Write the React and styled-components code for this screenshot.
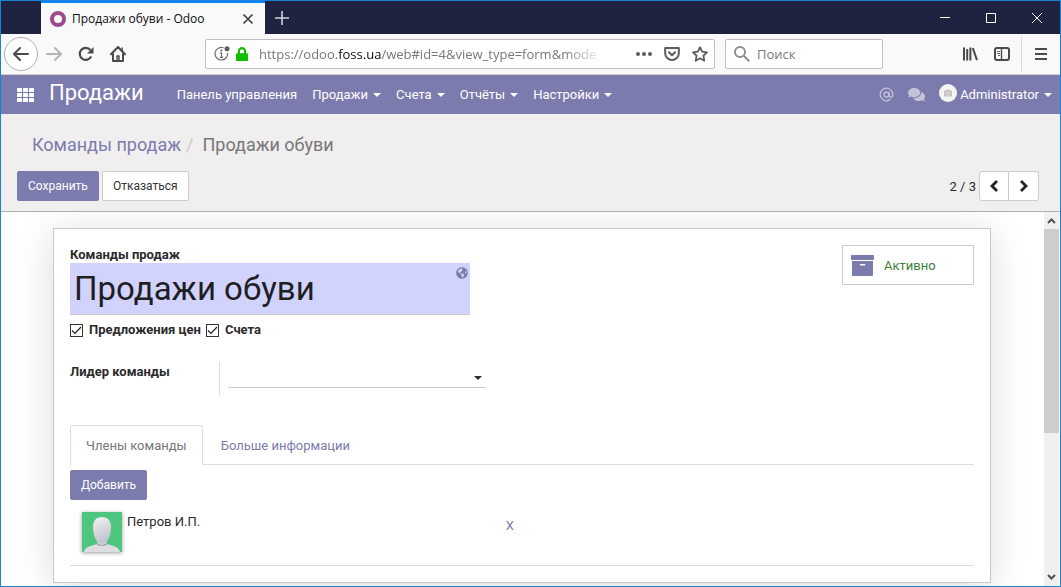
import styled, { createGlobalStyle } from "styled-components";
import { useState } from "react";
import { AtSign } from "lucide-react";
import { FaCamera, FaComments, FaGlobeAmericas, FaLock } from "react-icons/fa";

const menus = [
    { title: 'Панель управления', dropdown: false },
    { title: 'Продажи', dropdown: true },
    { title: 'Счета', dropdown: true },
    { title: 'Отчёты', dropdown: true },
    { title: 'Настройки', dropdown: true },
];

const tabs = ['Члены команды', 'Больше информации'];

export default function App() {
    return (
        <>
            <GlobalStyle />
            <WindowSC>
                <TitleBar />
                <Toolbar />
                <Navbar />
                <ControlPanel />
                <ContentSC>
                    <MainSC>
                        <TeamForm />
                    </MainSC>
                    <Scrollbar />
                </ContentSC>
            </WindowSC>
        </>
    )
}

function TitleBar() {
    return (
        <TitleBarSC>
            <BrowserTabSC>
                <FaviconSC />
                <span>Продажи обуви - Odoo</span>
                <TabCloseSC aria-label="Закрыть вкладку">
                    <svg width="12" height="12" viewBox="0 0 12 12" fill="none" stroke="#3c3c40" strokeWidth="1.6">
                        <path d="M1.500 1.500l9 9M10.500 1.500l-9 9" />
                    </svg>
                </TabCloseSC>
            </BrowserTabSC>
            <NewTabSC aria-label="Новая вкладка">
                <svg width="14" height="14" viewBox="0 0 14 14" stroke="#d2d3dc" strokeWidth="1.6">
                    <path d="M7 0v14M0 7h14" />
                </svg>
            </NewTabSC>
            <WindowButtonSC aria-label="Свернуть">
                <svg width="10" height="10" stroke="#fff"><path d="M0 4.5h10" /></svg>
            </WindowButtonSC>
            <WindowButtonSC aria-label="Развернуть">
                <svg width="10" height="10" stroke="#fff" fill="none"><path d="M.5.5h9v9h-9z" /></svg>
            </WindowButtonSC>
            <WindowButtonSC aria-label="Закрыть">
                <svg width="10" height="10" stroke="#fff"><path d="M0 0l10 10M10 0L0 10" /></svg>
            </WindowButtonSC>
        </TitleBarSC>
    )
}

function Toolbar() {
    return (
        <ToolbarSC>
            <BackSC aria-label="Назад">
                <svg width="16" height="16" viewBox="0 0 16 16" fill="none" stroke="#4a4a4f" strokeWidth="2" strokeLinecap="round" strokeLinejoin="round">
                    <path d="M15 8H1.5M7 2L1 8l6 6" />
                </svg>
            </BackSC>
            <ToolButtonSC aria-label="Вперёд">
                <svg width="16" height="16" viewBox="0 0 16 16" fill="none" stroke="#b4b4b6" strokeWidth="2" strokeLinecap="round" strokeLinejoin="round">
                    <path d="M1 8h13.5M9 2l6 6-6 6" />
                </svg>
            </ToolButtonSC>
            <ToolButtonSC aria-label="Обновить">
                <svg width="16" height="16" viewBox="0 0 16 16" fill="none" stroke="#4a4a4f" strokeWidth="2.2">
                    <path d="M13.2 10.5A6 6 0 1 1 12.4 4" />
                    <path d="M15.5 1v6.5H9z" fill="#4a4a4f" stroke="none" />
                </svg>
            </ToolButtonSC>
            <ToolButtonSC aria-label="Домашняя страница">
                <svg width="16" height="16" viewBox="0 0 16 16" fill="none" stroke="#4a4a4f" strokeWidth="2" strokeLinejoin="round" strokeLinecap="round">
                    <path d="M1 8.2L8 1l7 7.2M3 8v7h10V8" />
                    <path d="M7 15v-5h2v5" strokeWidth="1.4" />
                    <path d="M12.2 2v3" strokeWidth="1.4" />
                </svg>
            </ToolButtonSC>
            <AddressSC>
                <svg width="16" height="16" viewBox="0 0 16 16" fill="none" stroke="#6c6c70" strokeWidth="1.2">
                    <path d="M9.5 1.8A6.3 6.3 0 1 0 13.6 7" />
                    <path d="M7.5 6.8v4.6M5.8 11.4h3.4M6 6.8h1.5" strokeWidth="1.3" />
                    <circle cx="7.4" cy="4.4" r="1" fill="#6c6c70" stroke="none" />
                    <circle cx="13" cy="2.8" r="2.5" fill="#5a5a5f" stroke="none" />
                </svg>
                <FaLock size={14} color="#12bc00" />
                <UrlSC>https://odoo.<b>foss.ua</b>/web#id=4&amp;view_type=form&amp;mode</UrlSC>
                <AddressButtonSC aria-label="Действия на странице">
                    <svg width="16" height="16" viewBox="0 0 16 16" fill="#5c5c60">
                        <circle cx="2" cy="8" r="2" /><circle cx="8" cy="8" r="2" /><circle cx="14" cy="8" r="2" />
                    </svg>
                </AddressButtonSC>
                <AddressButtonSC aria-label="Сохранить в Pocket">
                    <svg width="16" height="16" viewBox="0 0 16 16" fill="none" stroke="#5c5c60" strokeWidth="2" strokeLinecap="round" strokeLinejoin="round">
                        <path d="M1.2 2h13.6v5.5a6.8 6.5 0 0 1-13.6 0z" />
                        <path d="M5 6.2l3 3 3-3" />
                    </svg>
                </AddressButtonSC>
                <AddressButtonSC aria-label="Добавить в закладки">
                    <svg width="16" height="16" viewBox="0 0 16 16" fill="none" stroke="#5c5c60" strokeWidth="1.8" strokeLinejoin="round">
                        <path d="M8 1.2l2.1 4.5 4.9.6-3.6 3.4.9 5L8 12.3l-4.3 2.4.9-5L1 6.3l4.900-.6z" />
                    </svg>
                </AddressButtonSC>
            </AddressSC>
            <SearchSC>
                <svg width="16" height="16" viewBox="0 0 16 16" fill="none" stroke="#8f8f92" strokeWidth="2">
                    <circle cx="6" cy="6" r="5" />
                    <path d="M9.8 9.8l5.4 5.4" />
                </svg>
                <input type="search" aria-label="Поиск" placeholder="Поиск" />
            </SearchSC>
            <ToolButtonSC aria-label="Библиотека">
                <svg width="16" height="16" viewBox="0 0 16 16" stroke="#4a4a4f" strokeWidth="2">
                    <path d="M2 1.5v13M5.2 3v11.5M8.4 1.5v13M10.8 2.2l4.2 12" />
                </svg>
            </ToolButtonSC>
            <ToolButtonSC aria-label="Боковая панель">
                <svg width="16" height="14" viewBox="0 0 16 14" fill="none" stroke="#4a4a4f">
                    <rect x="1" y="1" width="14" height="12" rx="2" strokeWidth="2" />
                    <path d="M7.5 1v12" strokeWidth="1.4" />
                    <path d="M3 4.500h3M3 6.500h3M4 8.500h2" strokeWidth="0.8" />
                </svg>
            </ToolButtonSC>
            <DividerSC />
            <ToolButtonSC aria-label="Меню">
                <svg width="12" height="12" viewBox="0 0 12 12" stroke="#4a4a4f" strokeWidth="2">
                    <path d="M0 1h12M0 6h12M0 11h12" />
                </svg>
            </ToolButtonSC>
        </ToolbarSC>
    )
}

function Caret() {
    return (
        <svg width="8" height="4" viewBox="0 0 8 4" fill="currentColor" aria-hidden="true">
            <path d="M0 0h8L4 4z" />
        </svg>
    )
}

function AppsIcon() {
    return (
        <svg width="18" height="14" viewBox="0 0 18 14" fill="currentColor">
            {[0, 5, 10].map(y => [0, 6, 12].map(x => (
                <rect key={`${x}-${y}`} x={x} y={y} width="5" height="4" rx="0.6" />
            )))}
        </svg>
    )
}

function ArchiveIcon() {
    return (
        <svg width="23" height="21" viewBox="0 0 23 21" fill="#7c7bad">
            <rect width="23" height="5" rx="0.5" />
            <path fillRule="evenodd" d="M1 6h21v14a1 1 0 0 1-1 1H2a1 1 0 0 1-1-1zM9.500 9a.8.8 0 0 0 0 1.600h4a.8.8 0 0 0 0-1.600z" />
        </svg>
    )
}

function Chevron({ d }) {
    return (
        <svg width="10" height="12" viewBox="0 0 10 12" fill="none" stroke="currentColor" strokeWidth="2.800">
            <path d={d} />
        </svg>
    )
}

function Navbar() {
    return (
        <NavbarSC>
            <NavButtonSC aria-label="Приложения"><AppsIcon /></NavButtonSC>
            <BrandSC href="#">Продажи</BrandSC>
            <MenuSC>
                {menus.map(menu => (
                    <NavButtonSC key={menu.title}>
                        {menu.title}
                        {menu.dropdown && <Caret />}
                    </NavButtonSC>
                ))}
            </MenuSC>
            <SystraySC>
                <NavButtonSC aria-label="Упоминания" $faded><AtSign size={15} /></NavButtonSC>
                <NavButtonSC aria-label="Сообщения" $faded><FaComments size={17} /></NavButtonSC>
                <NavButtonSC>
                    <UserPhotoSC><FaCamera size={8} /></UserPhotoSC>
                    Administrator
                    <Caret />
                </NavButtonSC>
            </SystraySC>
        </NavbarSC>
    )
}

function ControlPanel() {
    return (
        <ControlPanelSC>
            <BreadcrumbSC>
                <li><a href="#">Команды продаж</a></li>
                <li>Продажи обуви</li>
            </BreadcrumbSC>
            <ActionsSC>
                <ButtonSC $primary>Сохранить</ButtonSC>
                <ButtonSC>Отказаться</ButtonSC>
                <PagerSC>
                    <span>2 / 3</span>
                    <PagerButtonSC aria-label="Предыдущая"><Chevron d="M8 1L3 6l5 5" /></PagerButtonSC>
                    <PagerButtonSC aria-label="Следующая"><Chevron d="M2 1l5 5-5 5" /></PagerButtonSC>
                </PagerSC>
            </ActionsSC>
        </ControlPanelSC>
    )
}

function Checkbox({ label }) {
    return (
        <CheckboxSC>
            <BoxSC>
                <input type="checkbox" defaultChecked />
                <svg width="13" height="13" viewBox="0 0 13 13" fill="none" stroke="#222" strokeWidth="1.2">
                    <path d="M2 6.5L5 9.500l6-6.500" />
                </svg>
            </BoxSC>
            {label}
        </CheckboxSC>
    )
}

function TeamForm() {
    const [name, setName] = useState('Продажи обуви');
    const [activeTab, setActiveTab] = useState(0);

    return (
        <SheetSC>
            <SheetTopSC>
                <div>
                    <LabelSC htmlFor="team-name">Команды продаж</LabelSC>
                    <NameFieldSC>
                        <input id="team-name" value={name} onChange={e => setName(e.target.value)} />
                        <TranslateSC aria-label="Перевести"><FaGlobeAmericas size={12} /></TranslateSC>
                    </NameFieldSC>
                    <OptionsSC>
                        <Checkbox label="Предложения цен" />
                        <Checkbox label="Счета" />
                    </OptionsSC>
                </div>
                <StatButtonSC>
                    <ArchiveIcon />
                    Активно
                </StatButtonSC>
            </SheetTopSC>

            <GroupSC>
                <LabelSC htmlFor="team-leader">Лидер команды</LabelSC>
                <LeaderFieldSC>
                    <select id="team-leader"><option></option></select>
                    <Caret />
                </LeaderFieldSC>
            </GroupSC>

            <TabsSC role="tablist">
                {tabs.map((tab, i) => (
                    <TabSC
                        key={tab}
                        role="tab"
                        aria-selected={activeTab === i}
                        $active={activeTab === i}
                        onClick={() => setActiveTab(i)}
                    >
                        {tab}
                    </TabSC>
                ))}
            </TabsSC>

            <MembersSC>
                <ButtonSC $primary>Добавить</ButtonSC>
                <MemberSC>
                    <MemberPhoto />
                    <span>Петров И.П.</span>
                    <RemoveSC aria-label="Удалить">X</RemoveSC>
                </MemberSC>
            </MembersSC>
        </SheetSC>
    )
}

function MemberPhoto() {
    return (
        <MemberPhotoSC viewBox="0 0 40 40" role="img" aria-label="Петров И.П.">
            <defs>
                <linearGradient id="head" x1="0" y1="0" x2="0.3" y2="1">
                    <stop offset="0" stopColor="#f3f3f4" />
                    <stop offset="0.5" stopColor="#d9dade" />
                    <stop offset="1" stopColor="#c0c5cd" />
                </linearGradient>
            </defs>
            <rect width="40" height="40" fill="#4fc67f" />
            <path d="M2 40c1-5 6-6 13-8l1-4h8l1 4c7 2 12 3 13 8z" fill="#dcdee1" />
            <path d="M14 29c2 5 10 5 12 0l-1 3.500c-3 2-7 2-10 0z" fill="#9fa5ad" />
            <path d="M20 5c6 0 9 4 9 10 0 8-3 17-9 17s-9-9-9-17c0-6 3-10 9-10z" fill="url(#head)" />
        </MemberPhotoSC>
    )
}

function Scrollbar() {
    return (
        <ScrollbarSC aria-hidden="true">
            <svg width="15" height="17" fill="none" stroke="#505050" strokeWidth="2"><path d="M4 11l3.500-3.500L11 11" /></svg>
            <ScrollTrackSC><ScrollThumbSC /></ScrollTrackSC>
            <svg width="15" height="17" fill="none" stroke="#505050" strokeWidth="2"><path d="M4 6l3.500 3.500L11 6" /></svg>
        </ScrollbarSC>
    )
}

const GlobalStyle = createGlobalStyle`
    * {
        box-sizing: border-box;
    }

    body {
        margin: 0;
        font-family: Roboto, "Liberation Sans", sans-serif;
        font-size: 13px;
        color: #2b2b2b;
        background-color: #fff;
    }

    button, input, select {
        font: inherit;
        color: inherit;
        margin: 0;
        padding: 0;
        border: none;
        outline: none;
        background: none;
    }

    svg {
        flex: none;
    }

    a {
        color: inherit;
        text-decoration: none;
    }
`;

const WindowSC = styled.div`
    min-height: 100vh;
    display: flex;
    flex-direction: column;
    border: 1px solid #1883d7;
`;

const TitleBarSC = styled.header`
    height: 33px;
    display: flex;
    padding-left: 40px;
    background-color: #202340;
    font-family: "Open Sans", "Noto Sans", sans-serif;
    font-size: 12px;
`;

const BrowserTabSC = styled.div`
    width: 224px;
    display: flex;
    align-items: center;
    padding: 0 9px;
    gap: 6px;
    border-top: 2px solid #0a84ff;
    background-color: #f9f9f9;
    color: #0c0c0d;
    white-space: nowrap;
`;

const FaviconSC = styled.span`
    width: 16px;
    height: 16px;
    border: 4px solid #9c4a8b;
    border-radius: 50%;
`;

const TabCloseSC = styled.button`
    display: flex;
    margin-left: auto;
    padding: 2px;
`;

const NewTabSC = styled.button`
    width: 34px;
    display: grid;
    place-items: center;
    margin-right: auto;
`;

const WindowButtonSC = styled.button`
    width: 46px;
    display: grid;
    place-items: center;
`;

const ToolbarSC = styled.div`
    height: 41px;
    display: flex;
    align-items: center;
    padding: 0 3px;
    border-bottom: 1px solid #d0d0d2;
    background-color: #f9f9f9;
    font-family: "Open Sans", "Noto Sans", sans-serif;
    font-size: 13px;
`;

const ToolButtonSC = styled.button`
    width: 32px;
    height: 32px;
    display: grid;
    place-items: center;
`;

const BackSC = styled(ToolButtonSC)`
    width: 34px;
    height: 34px;
    border: 1px solid #b1b1b3;
    border-radius: 50%;
    background-color: #fff;
`;

const AddressSC = styled.div`
    flex: 1;
    min-width: 0;
    height: 30px;
    display: flex;
    align-items: center;
    gap: 5px;
    margin-left: 71px;
    padding: 0 6px 0 8px;
    border: 1px solid #bebec0;
    border-radius: 2px;
    background-color: #fff;
`;

const UrlSC = styled.span`
    flex: 1;
    margin: 0 28px 0 5px;
    white-space: nowrap;
    color: #77777a;
    mask-image: linear-gradient(to left, transparent, #000 40px);

    b {
        font-weight: 400;
        color: #0c0c0d;
    }
`;

const AddressButtonSC = styled.button`
    display: flex;
    margin-right: 7px;

    &:last-child {
        margin-right: 0;
    }
`;

const SearchSC = styled.div`
    width: 158px;
    height: 30px;
    display: flex;
    align-items: center;
    gap: 7px;
    margin: 0 71px 0 10px;
    padding: 0 8px;
    border: 1px solid #bebec0;
    border-radius: 2px;
    background-color: #fff;

    input {
        width: 100%;
        min-width: 0;
    }

    input::placeholder {
        color: #77777a;
    }
`;

const DividerSC = styled.span`
    width: 1px;
    height: 34px;
    margin: 0 3px;
    background-color: #d9d9da;
`;

const NavbarSC = styled.nav`
    height: 39px;
    display: flex;
    align-items: center;
    padding: 0 8px 0 16px;
    background-color: #7c7bad;
    color: #fff;
`;

const NavButtonSC = styled.button`
    display: flex;
    align-items: center;
    gap: 5px;
    white-space: nowrap;
    opacity: ${props => props.$faded ? 0.55 : 1};
`;

const BrandSC = styled.a`
    margin: 0 33px 5px 14px;
    font-size: 22px;
`;

const MenuSC = styled.div`
    flex: 1;
    display: flex;
    gap: 15px;
`;

const SystraySC = styled.div`
    display: flex;
    align-items: center;
    gap: 14px;
`;

const UserPhotoSC = styled.span`
    width: 18px;
    height: 18px;
    display: grid;
    place-items: center;
    margin: 0 -2px 4px 0;
    border-radius: 50%;
    background-color: #f4f4f4;
    color: #c2c2c2;
`;

const ControlPanelSC = styled.section`
    display: flex;
    flex-direction: column;
    gap: 14px;
    padding: 18px 21px 10px 16px;
    border-bottom: 1px solid #afafb6;
    background-color: #f0eeee;
`;

const BreadcrumbSC = styled.ol`
    display: flex;
    margin: 0;
    padding: 0 15px;
    list-style: none;
    font-size: 18px;
    line-height: 25px;
    color: #777;

    a {
        color: #7c7bad;
    }

    li + li::before {
        content: "/";
        padding: 0 9px 0 5px;
        color: #ccc;
    }
`;

const ActionsSC = styled.div`
    display: flex;
    gap: 3px;
`;

const ButtonSC = styled.button`
    height: 30px;
    padding: 0 10px;
    border: 1px solid ${props => props.$primary ? '#7c7bad' : '#ccc'};
    border-radius: 2px;
    background-color: ${props => props.$primary ? '#7c7bad' : '#fff'};
    color: ${props => props.$primary ? '#fff' : '#333'};
    font-size: 12px;
`;

const PagerSC = styled.div`
    display: flex;
    align-items: center;
    margin-left: auto;

    span {
        margin-right: 3px;
    }
`;

const PagerButtonSC = styled.button`
    width: 30px;
    height: 30px;
    display: grid;
    place-items: center;
    border: 1px solid #ccc;
    border-radius: 3px 0 0 3px;
    background-color: #fff;
    color: #222;

    & + & {
        border-left: none;
        border-radius: 0 3px 3px 0;
    }
`;

const ContentSC = styled.div`
    flex: 1;
    display: flex;
    padding-right: 1px;
`;

const MainSC = styled.main`
    flex: 1;
    min-width: 0;
    overflow: hidden;
    padding: 16px 53px 3px 52px;
`;

const SheetSC = styled.form.attrs(() => ({ onSubmit: e => e.preventDefault() }))`
    padding: 16px;
    border: 1px solid #c8c8d3;
    background-color: #fff;
    box-shadow: 0 5px 36px rgba(0, 0, 0, 0.14);
`;

const SheetTopSC = styled.div`
    display: flex;
    justify-content: space-between;
    align-items: flex-start;
`;

const LabelSC = styled.label`
    display: block;
    padding-top: 1px;
    line-height: 17px;
    font-weight: 700;
`;

const NameFieldSC = styled.div`
    position: relative;
    width: 400px;

    input {
        width: 100%;
        height: 52px;
        padding: 0 4px;
        border-bottom: 1px solid #ccc;
        background-color: #d2d2ff;
        font-size: 33px;
        color: #1f1f1f;
    }
`;

const TranslateSC = styled.button`
    position: absolute;
    top: 4px;
    right: 2px;
    display: flex;
    color: #7c7bad;
`;

const OptionsSC = styled.div`
    display: flex;
    gap: 5px;
    margin-top: 6px;
`;

const CheckboxSC = styled.label`
    display: flex;
    align-items: center;
    gap: 6px;
    line-height: 18px;
    font-weight: 700;
`;

const BoxSC = styled.span`
    display: grid;

    input, svg {
        grid-area: 1 / 1;
    }

    input {
        width: 13px;
        height: 13px;
        appearance: none;
        border: 1px solid #333;
        background-color: #fff;
    }

    svg {
        pointer-events: none;
        visibility: hidden;
    }

    input:checked + svg {
        visibility: visible;
    }
`;

const StatButtonSC = styled.button`
    width: 132px;
    height: 40px;
    display: flex;
    align-items: center;
    gap: 10px;
    padding: 0 8px;
    border: 1px solid #ccc;
    color: #3d8241;
`;

const GroupSC = styled.div`
    display: flex;
    margin-top: 23px;

    ${LabelSC} {
        width: 149px;
        height: 33px;
    }
`;

const LeaderFieldSC = styled.div`
    display: grid;
    align-items: center;
    padding: 5px 0 7px 8px;
    border-left: 1px solid #ddd;

    select, svg {
        grid-area: 1 / 1;
    }

    select {
        width: 258px;
        height: 21px;
        appearance: none;
        border-bottom: 1px solid #ccc;
    }

    svg {
        justify-self: end;
        margin-right: 4px;
        pointer-events: none;
    }
`;

const TabsSC = styled.div`
    display: flex;
    gap: 2px;
    margin-top: 30px;
    border-bottom: 1px solid #ddd;
`;

const TabSC = styled.button`
    height: 40px;
    margin-bottom: -1px;
    padding: 0 15px;
    border: 1px solid ${props => props.$active ? '#ddd' : 'transparent'};
    border-bottom-color: ${props => props.$active ? '#fff' : 'transparent'};
    border-radius: 3px 3px 0 0;
    color: ${props => props.$active ? '#777' : '#7c7bad'};
`;

const MembersSC = styled.div`
    padding-top: 5px;
    border-bottom: 1px solid #ddd;
`;

const MemberSC = styled.div`
    display: flex;
    width: 50%;
    padding: 12px 8px 13px 12px;

    span {
        flex: 1;
        padding-left: 5px;
        line-height: 20px;
    }
`;

const MemberPhotoSC = styled.svg`
    width: 40px;
    height: 40px;
    box-shadow: 0 1px 4px rgba(0, 0, 0, 0.4);
`;

const RemoveSC = styled.button`
    align-self: flex-start;
    margin-top: 6px;
    color: #7c7bad;
`;

const ScrollbarSC = styled.div`
    width: 15px;
    display: flex;
    flex-direction: column;
    background-color: #f0f0f0;
`;

const ScrollTrackSC = styled.div`
    flex: 1;
`;

const ScrollThumbSC = styled.div`
    height: 60%;
    background-color: #cdcdcd;
`;
